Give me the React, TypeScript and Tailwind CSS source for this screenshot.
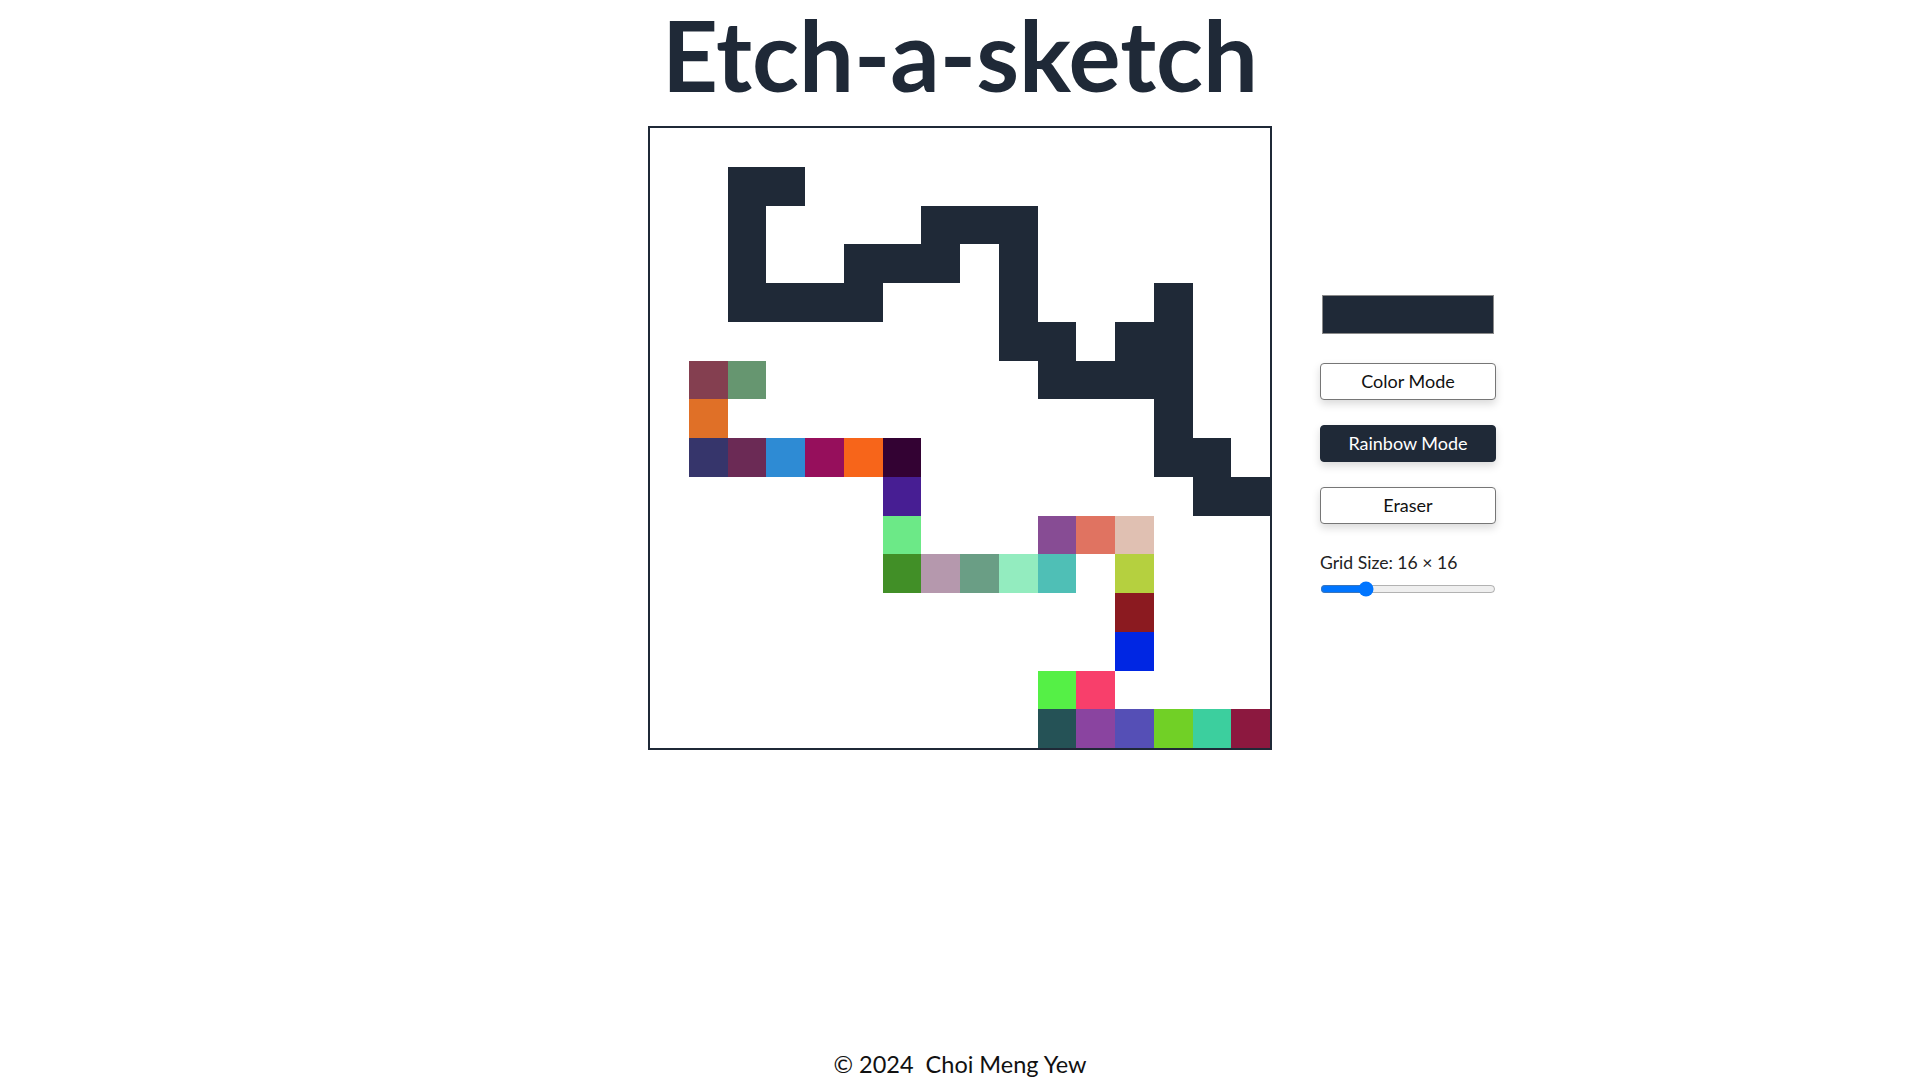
import React from "react";

const rows: string[] = [
  "................",
  "..##............",
  "..#....###......",
  "..#..###.#......",
  "..####...#...#..",
  ".........##.##..",
  ".AB.......####..",
  ".C...........#..",
  ".DEFGHI......##.",
  "......J.......##",
  "......K...LMN...",
  "......OPQRS.T...",
  "............U...",
  "............V...",
  "..........WX....",
  "..........YZabcd",
];

const palette: Record<string, string> = {
  ".": "bg-white",
  "#": "bg-[#1f2937]",
  A: "bg-[#843f50]",
  B: "bg-[#669670]",
  C: "bg-[#e07027]",
  D: "bg-[#36356b]",
  E: "bg-[#6b2a55]",
  F: "bg-[#2e8bd4]",
  G: "bg-[#960f5c]",
  H: "bg-[#f7651a]",
  I: "bg-[#330233]",
  J: "bg-[#471e93]",
  K: "bg-[#6ce987]",
  L: "bg-[#874c94]",
  M: "bg-[#e07361]",
  N: "bg-[#e0c0b2]",
  O: "bg-[#418f27]",
  P: "bg-[#b598ad]",
  Q: "bg-[#6a9e85]",
  R: "bg-[#93ecbf]",
  S: "bg-[#4fbfb6]",
  T: "bg-[#b5d03f]",
  U: "bg-[#8b1a20]",
  V: "bg-[#0026e3]",
  W: "bg-[#55f046]",
  X: "bg-[#f83f6b]",
  Y: "bg-[#255256]",
  Z: "bg-[#8a44a0]",
  a: "bg-[#554fb6]",
  b: "bg-[#71d026]",
  c: "bg-[#3ccf9e]",
  d: "bg-[#8c183f]",
};

function Sketch() {
  return (
    <div className="border-2 border-[#1f2937] w-[624px] h-[624px] grid grid-cols-[repeat(16,1fr)] grid-rows-[repeat(16,1fr)]">
      {rows.flatMap((r, ri) =>
        r.split("").map((ch, ci) => <div key={`${ri}-${ci}`} className={palette[ch]} />)
      )}
    </div>
  );
}

function Btn({ label, active }: { label: string; active?: boolean }) {
  return (
    <button
      className={
        active
          ? "w-[176px] h-[37px] rounded-[4px] border border-[#1f2937] bg-[#1f2937] text-white text-[18px] shadow-[0_4px_8px_rgba(0,0,0,0.15)]"
          : "w-[176px] h-[37px] rounded-[4px] border border-[#767676] bg-white text-[#111] text-[18px] shadow-[0_4px_8px_rgba(0,0,0,0.15)]"
      }
    >
      {label}
    </button>
  );
}

function Sidebar() {
  return (
    <div className="self-start mt-[169px] flex flex-col items-start pl-12">
      <div className="ml-[2px] w-[172px] h-[39px] border border-[#8a8a8a] bg-[#1f2937]" />
      <div className="mt-[29px] flex flex-col gap-[25px]">
        <Btn label="Color Mode" />
        <Btn label="Rainbow Mode" active />
        <Btn label="Eraser" />
      </div>
      <div className="mt-[26px] text-[17.6px] leading-[26px] text-[#222]">Grid Size: 16 × 16</div>
      <input type="range" min={1} max={64} defaultValue={16} className="w-[176px] mt-[5px] mx-0 mb-0 accent-[#0075ff]" />
    </div>
  );
}

export default function App() {
  return (
    <div className="min-h-screen flex flex-col bg-white text-[#1f2937] font-['Lato','Noto_Sans',sans-serif]">
      <h1 className="text-center text-[97.5px] leading-[109px] font-bold text-[#1f2937]">Etch-a-sketch</h1>
      <main className="mt-[17px] grid grid-cols-[1fr_auto_1fr] items-center">
        <div />
        <Sketch />
        <Sidebar />
      </main>
      <footer className="mt-auto pb-[2px] text-center text-[23.5px] leading-[28px] text-[#111]">
        © 2024&nbsp; Choi Meng Yew
      </footer>
    </div>
  );
}
